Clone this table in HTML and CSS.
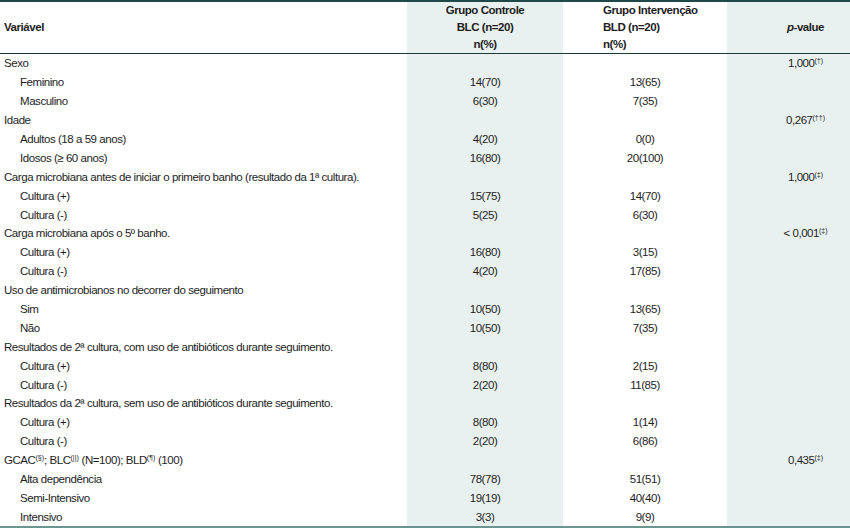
FILE: index.html
```html
<!DOCTYPE html>
<html lang="pt">
<head>
<meta charset="utf-8">
<link rel="stylesheet" href="styles.css">
</head>
<body>
<table class="data">
  <colgroup>
    <col class="c-var">
    <col class="c-blc">
    <col class="c-bld">
    <col class="c-p">
  </colgroup>
  <thead>
    <tr>
      <th class="var">Variável</th>
      <th class="blc">Grupo Controle<br>BLC (n=20)<br>n(%)</th>
      <th class="bld">Grupo Intervenção<br>BLD (n=20)<br>n(%)</th>
      <th class="p"><i>p</i>-value</th>
    </tr>
  </thead>
  <tbody>
    <tr><td class="var">Sexo</td><td class="blc"></td><td class="bld"></td><td class="p">1,000<sup>(†)</sup></td></tr>
    <tr><td class="var sub">Feminino</td><td class="blc">14(70)</td><td class="bld">13(65)</td><td class="p"></td></tr>
    <tr><td class="var sub">Masculino</td><td class="blc">6(30)</td><td class="bld">7(35)</td><td class="p"></td></tr>
    <tr><td class="var">Idade</td><td class="blc"></td><td class="bld"></td><td class="p">0,267<sup>(††)</sup></td></tr>
    <tr><td class="var sub">Adultos (18 a 59 anos)</td><td class="blc">4(20)</td><td class="bld">0(0)</td><td class="p"></td></tr>
    <tr><td class="var sub">Idosos (≥ 60 anos)</td><td class="blc">16(80)</td><td class="bld">20(100)</td><td class="p"></td></tr>
    <tr><td class="var">Carga microbiana antes de iniciar o primeiro banho (resultado da 1ª cultura).</td><td class="blc"></td><td class="bld"></td><td class="p">1,000<sup>(‡)</sup></td></tr>
    <tr><td class="var sub">Cultura (+)</td><td class="blc">15(75)</td><td class="bld">14(70)</td><td class="p"></td></tr>
    <tr><td class="var sub">Cultura (-)</td><td class="blc">5(25)</td><td class="bld">6(30)</td><td class="p"></td></tr>
    <tr><td class="var">Carga microbiana após o 5º banho.</td><td class="blc"></td><td class="bld"></td><td class="p">&lt; 0,001<sup>(‡)</sup></td></tr>
    <tr><td class="var sub">Cultura (+)</td><td class="blc">16(80)</td><td class="bld">3(15)</td><td class="p"></td></tr>
    <tr><td class="var sub">Cultura (-)</td><td class="blc">4(20)</td><td class="bld">17(85)</td><td class="p"></td></tr>
    <tr><td class="var">Uso de antimicrobianos no decorrer do seguimento</td><td class="blc"></td><td class="bld"></td><td class="p"></td></tr>
    <tr><td class="var sub">Sim</td><td class="blc">10(50)</td><td class="bld">13(65)</td><td class="p"></td></tr>
    <tr><td class="var sub">Não</td><td class="blc">10(50)</td><td class="bld">7(35)</td><td class="p"></td></tr>
    <tr><td class="var">Resultados de 2ª cultura, com uso de antibióticos durante seguimento.</td><td class="blc"></td><td class="bld"></td><td class="p"></td></tr>
    <tr><td class="var sub">Cultura (+)</td><td class="blc">8(80)</td><td class="bld">2(15)</td><td class="p"></td></tr>
    <tr><td class="var sub">Cultura (-)</td><td class="blc">2(20)</td><td class="bld">11(85)</td><td class="p"></td></tr>
    <tr><td class="var">Resultados da 2ª cultura, sem uso de antibióticos durante seguimento.</td><td class="blc"></td><td class="bld"></td><td class="p"></td></tr>
    <tr><td class="var sub">Cultura (+)</td><td class="blc">8(80)</td><td class="bld">1(14)</td><td class="p"></td></tr>
    <tr><td class="var sub">Cultura (-)</td><td class="blc">2(20)</td><td class="bld">6(86)</td><td class="p"></td></tr>
    <tr><td class="var">GCAC<sup>(§)</sup>; BLC<sup>(||)</sup> (N=100); BLD<sup>(¶)</sup> (100)</td><td class="blc"></td><td class="bld"></td><td class="p">0,435<sup>(‡)</sup></td></tr>
    <tr><td class="var sub">Alta dependência</td><td class="blc">78(78)</td><td class="bld">51(51)</td><td class="p"></td></tr>
    <tr><td class="var sub">Semi-Intensivo</td><td class="blc">19(19)</td><td class="bld">40(40)</td><td class="p"></td></tr>
    <tr><td class="var sub">Intensivo</td><td class="blc">3(3)</td><td class="bld">9(9)</td><td class="p"></td></tr>
  </tbody>
</table>
</body>
</html>
```
FILE: styles.css
```css
html, body {
  margin: 0;
  padding: 0;
  background: #ffffff;
}

body {
  font-family: "Liberation Sans", Arial, sans-serif;
  font-size: 11.5px;
  letter-spacing: -0.45px;
  color: #1e1e1e;
}

.data {
  width: 850px;
  border-collapse: collapse;
  table-layout: fixed;
  border-top: 2px solid #1f4848;
  border-bottom: 2px solid #6b968f;
}

.c-var { width: 407px; }
.c-blc { width: 156px; }
.c-bld { width: 164px; }
.c-p { width: 123px; }

.data th {
  height: 51px;
  padding: 0;
  font-weight: bold;
  line-height: 17px;
  vertical-align: middle;
  border-bottom: 1px solid #1c3838;
}

.data td {
  height: 18.9px;
  padding: 0;
  line-height: 14px;
  vertical-align: middle;
  white-space: nowrap;
}

.var {
  text-align: left;
  padding-left: 4px !important;
}

.var.sub {
  padding-left: 20px !important;
}

.blc {
  text-align: center;
  background: #e9f1f0;
}

.bld {
  text-align: center;
}

.data th.bld {
  text-align: left;
  padding-left: 40px;
}

.p {
  text-align: center;
  background: #e9f1f0;
  padding-left: 34px !important;
}

sup {
  font-size: 7px;
  letter-spacing: 0;
  line-height: 0;
  vertical-align: 4px;
}
```
